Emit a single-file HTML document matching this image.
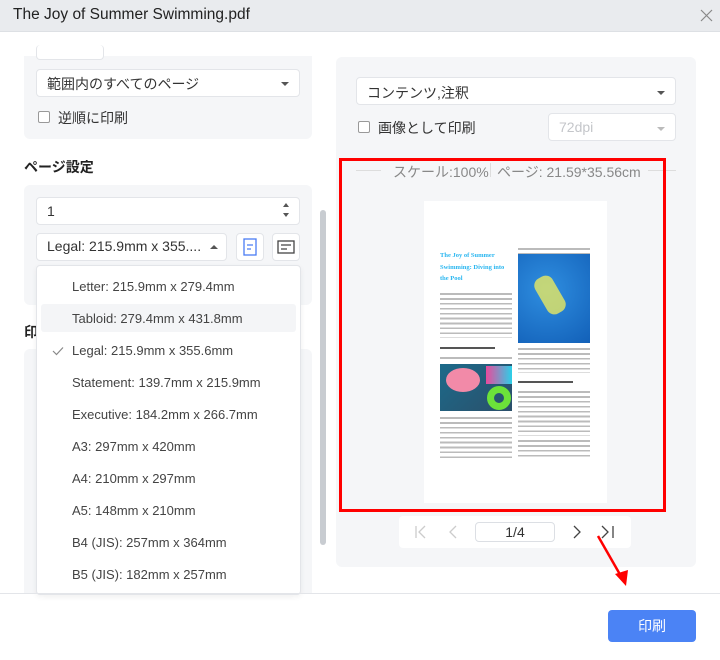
<!DOCTYPE html>
<html><head><meta charset="utf-8"><style>
*{box-sizing:border-box;margin:0;padding:0}
body{width:720px;height:660px;position:relative;overflow:hidden;background:#fff;font-family:"Liberation Sans","Noto Sans CJK JP",sans-serif;color:#333;font-size:14px}
.a{position:absolute}
.box{position:absolute;background:#fff;border:1px solid #e3e5e9;border-radius:4px}
.caret{position:absolute;width:0;height:0;border-left:4px solid transparent;border-right:4px solid transparent;border-top:4px solid #555}
.item{position:absolute;left:72px;font-size:13px;color:#444}
.tx{position:absolute;background:repeating-linear-gradient(#fff 0,#fff 3.2px,#bbb 3.2px,#bbb 4.9px)}
</style></head><body>
<div class="a" style="left:0;top:0;width:720px;height:32px;background:#e9ebee;border-bottom:1px solid #dde0e4"></div>
<div class="a" style="left:13px;top:6px;font-size:15.5px;color:#222">The Joy of Summer Swimming.pdf</div>
<svg class="a" style="left:700px;top:9px" width="13" height="13"><path d="M1 1L12 12M12 1L1 12" stroke="#888" stroke-width="1.2"/></svg>

<div class="a" style="left:24px;top:56px;width:288px;height:83px;background:#f5f6f8;border-radius:0 0 6px 6px"></div>
<div class="box" style="left:36px;top:45px;width:68px;height:15px;border-top:none"></div>
<div class="box" style="left:36px;top:69px;width:264px;height:28px"></div>
<div class="a" style="left:47px;top:74px;font-size:14px;color:#333">範囲内のすべてのページ</div>
<div class="caret" style="left:281px;top:82px"></div>
<div class="a" style="left:38px;top:111px;width:12px;height:12px;border:1px solid #999;border-radius:2px;background:#fff"></div>
<div class="a" style="left:58px;top:108px;font-size:14px">逆順に印刷</div>

<div class="a" style="left:24px;top:157px;font-size:14px;font-weight:bold;color:#222">ページ設定</div>
<div class="a" style="left:24px;top:185px;width:288px;height:120px;background:#f5f6f8;border-radius:6px"></div>
<div class="box" style="left:36px;top:197px;width:264px;height:28px"></div>
<div class="a" style="left:47px;top:203px;font-size:14px">1</div>
<div class="a" style="left:283px;top:203px;border-left:3.5px solid transparent;border-right:3.5px solid transparent;border-bottom:4px solid #555"></div>
<div class="a" style="left:283px;top:213px;border-left:3.5px solid transparent;border-right:3.5px solid transparent;border-top:4px solid #555"></div>
<div class="box" style="left:36px;top:233px;width:191px;height:28px"></div>
<div class="a" style="left:47px;top:238px;font-size:14px">Legal: 215.9mm x 355....</div>
<div class="a" style="left:210px;top:245px;border-left:4px solid transparent;border-right:4px solid transparent;border-bottom:4px solid #555"></div>
<div class="box" style="left:236px;top:233px;width:28px;height:28px"></div>
<svg class="a" style="left:242px;top:238px" width="16" height="18"><rect x="2" y="1" width="12" height="16" fill="none" stroke="#4a7cf4" stroke-width="1.3"/><path d="M5 7H11M5 11H9" stroke="#4a7cf4" stroke-width="1.3"/></svg>
<div class="box" style="left:272px;top:233px;width:28px;height:28px"></div>
<svg class="a" style="left:277px;top:240px" width="18" height="14"><rect x="1" y="1" width="16" height="12" fill="none" stroke="#444" stroke-width="1.3"/><path d="M4 5H14M4 9H10" stroke="#444" stroke-width="1.3"/></svg>

<div class="a" style="left:24px;top:322px;font-size:14px;font-weight:bold;color:#222">印</div>
<div class="a" style="left:24px;top:349px;width:288px;height:244px;background:#f5f6f8;border-radius:6px 6px 0 0"></div>
<div class="a" style="left:320px;top:210px;width:6px;height:335px;background:#c8ccd1;border-radius:3px"></div>

<div class="box" style="left:36px;top:265px;width:265px;height:330px;box-shadow:0 2px 6px rgba(0,0,0,.06)"></div>
<div class="a" style="left:41px;top:304px;width:255px;height:28px;background:#f4f5f7;border-radius:3px"></div>
<div class="item" style="top:279px">Letter: 215.9mm x 279.4mm</div>
<div class="item" style="top:311px">Tabloid: 279.4mm x 431.8mm</div>
<svg class="a" style="left:52px;top:346px" width="12" height="10"><path d="M1 5L4.5 8.5L11 1.5" fill="none" stroke="#888" stroke-width="1.2"/></svg>
<div class="item" style="top:343px">Legal: 215.9mm x 355.6mm</div>
<div class="item" style="top:375px">Statement: 139.7mm x 215.9mm</div>
<div class="item" style="top:407px">Executive: 184.2mm x 266.7mm</div>
<div class="item" style="top:439px">A3: 297mm x 420mm</div>
<div class="item" style="top:471px">A4: 210mm x 297mm</div>
<div class="item" style="top:503px">A5: 148mm x 210mm</div>
<div class="item" style="top:535px">B4 (JIS): 257mm x 364mm</div>
<div class="item" style="top:567px">B5 (JIS): 182mm x 257mm</div>

<div class="a" style="left:336px;top:57px;width:360px;height:510px;background:#f5f6f8;border-radius:6px"></div>
<div class="box" style="left:356px;top:77px;width:320px;height:28px"></div>
<div class="a" style="left:367px;top:83px;font-size:14px">コンテンツ,注釈</div>
<div class="caret" style="left:657px;top:91px"></div>
<div class="a" style="left:358px;top:121px;width:12px;height:12px;border:1px solid #999;border-radius:2px;background:#fff"></div>
<div class="a" style="left:378px;top:118px;font-size:14px">画像として印刷</div>
<div class="box" style="left:548px;top:113px;width:128px;height:28px"></div>
<div class="a" style="left:559px;top:119px;font-size:14px;color:#c4c6ca">72dpi</div>
<div class="caret" style="left:657px;top:127px;border-top-color:#bbb"></div>

<div class="a" style="left:356px;top:170px;width:25px;height:1px;background:#ddd"></div>
<div class="a" style="left:648px;top:170px;width:28px;height:1px;background:#ddd"></div>
<div class="a" style="left:393px;top:162px;font-size:14px;color:#888">スケール:100%</div>
<div class="a" style="left:490px;top:163px;width:1px;height:14px;background:#ddd"></div>
<div class="a" style="left:497px;top:162px;font-size:14px;color:#888">ページ: 21.59*35.56cm</div>

<div class="a" style="left:424px;top:201px;width:183px;height:302px;background:#fff"></div>
<div class="a" style="left:440px;top:250px;font-size:6.5px;line-height:11.5px;font-weight:bold;color:#29b6f0;font-family:'Liberation Serif',serif">The Joy of Summer<br>Swimming: Diving into<br>the Pool</div>
<div class="tx" style="left:440px;top:290px;width:72px;height:48px"></div>
<div class="a" style="left:440px;top:347px;width:55px;height:1.5px;background:#555"></div>
<div class="tx" style="left:440px;top:354px;width:72px;height:8px"></div>
<div class="a" style="left:440px;top:364px;width:72px;height:47px;background:linear-gradient(135deg,#1c6a8a,#2b4f6a)"></div>
<div class="a" style="left:446px;top:368px;width:34px;height:24px;background:#f28aa8;border-radius:50%"></div>
<div class="a" style="left:486px;top:366px;width:26px;height:18px;background:linear-gradient(90deg,#e94a9c,#2bd0e8)"></div>
<div class="a" style="left:487px;top:386px;width:24px;height:24px;border:7px solid #6ce23a;border-radius:50%"></div>
<div class="tx" style="left:440px;top:414px;width:72px;height:46px"></div>
<div class="tx" style="left:518px;top:245px;width:72px;height:9px"></div>
<div class="a" style="left:518px;top:254px;width:72px;height:89px;background:radial-gradient(circle at 40% 40%,#2f8ee0,#1260b8)"></div>
<div class="a" style="left:540px;top:275px;width:20px;height:40px;background:#e8e860;transform:rotate(-30deg);border-radius:8px;opacity:.8"></div>
<div class="tx" style="left:518px;top:345px;width:72px;height:28px"></div>
<div class="a" style="left:518px;top:381px;width:55px;height:1.5px;background:#555"></div>
<div class="tx" style="left:518px;top:388px;width:72px;height:48px"></div>
<div class="tx" style="left:518px;top:437px;width:72px;height:20px"></div>

<div class="a" style="left:339px;top:158px;width:327px;height:354px;border:3px solid #f00"></div>

<div class="a" style="left:399px;top:516px;width:232px;height:32px;background:#fff;border-radius:4px"></div>
<svg class="a" style="left:412px;top:524px" width="220" height="16"><path d="M4 2V14M13 2L7 8L13 14" fill="none" stroke="#ccc" stroke-width="1.3"/><path d="M44 2L38 8L44 14" fill="none" stroke="#ccc" stroke-width="1.3"/><path d="M162 2L168 8L162 14" fill="none" stroke="#444" stroke-width="1.3"/><path d="M190 2L196 8L190 14M201 2V14" fill="none" stroke="#444" stroke-width="1.3"/></svg>
<div class="box" style="left:475px;top:522px;width:80px;height:20px;border-color:#dcdfe4"></div>
<div class="a" style="left:475px;top:524px;width:80px;text-align:center;font-size:14px;color:#333">1/4</div>

<svg class="a" style="left:590px;top:530px" width="50" height="60"><path d="M8 6L32 48" stroke="#f00" stroke-width="2.5"/><path d="M25 44L36 56L38 40Z" fill="#f00"/></svg>

<div class="a" style="left:0;top:593px;width:720px;height:1px;background:#e3e5e9"></div>
<div class="a" style="left:608px;top:610px;width:88px;height:32px;background:#4b83f5;border-radius:4px;color:#fff;font-size:14px;text-align:center;line-height:32px">印刷</div>
</body></html>
